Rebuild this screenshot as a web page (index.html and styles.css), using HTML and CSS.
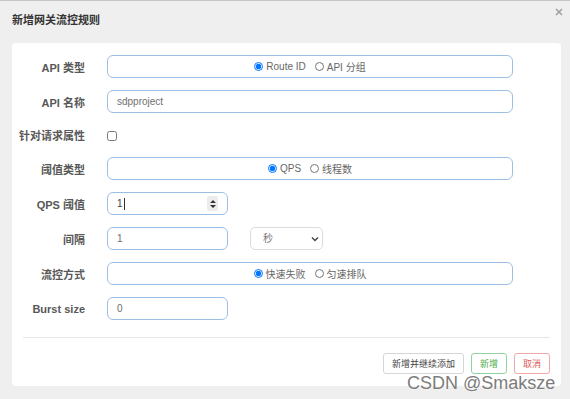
FILE: index.html
```html
<!DOCTYPE html>
<html lang="zh-CN">
<head>
    <meta charset="UTF-8">
    <meta name="viewport" content="width=device-width, initial-scale=1.0">
    <title>新增网关流控规则</title>
    <link rel="stylesheet" href="styles.css">
</head>
<body>
    <div class="dialog">
        <div class="dialog-header">
            <h3 class="dialog-title">新增网关流控规则</h3>
            <span class="close" title="关闭">
                <svg width="8" height="8" viewBox="0 0 8 8"><path d="M1 1L7 7M7 1L1 7" stroke="#a0a0a0" stroke-width="1.6" fill="none"/></svg>
            </span>
        </div>

        <div class="dialog-body">
            <form class="rule-form">
                <div class="row">
                    <label class="label">API 类型</label>
                    <div class="box radios">
                        <label class="opt"><input type="radio" name="resourceMode" checked><span>Route ID</span></label>
                        <label class="opt"><input type="radio" name="resourceMode"><span>API 分组</span></label>
                    </div>
                </div>

                <div class="row">
                    <label class="label">API 名称</label>
                    <input class="box text" type="text" value="sdpproject">
                </div>

                <div class="row row-check">
                    <label class="label">针对请求属性</label>
                    <div><input class="check" type="checkbox"></div>
                </div>

                <div class="row">
                    <label class="label">阈值类型</label>
                    <div class="box radios">
                        <label class="opt"><input type="radio" name="grade" checked><span>QPS</span></label>
                        <label class="opt"><input type="radio" name="grade"><span>线程数</span></label>
                    </div>
                </div>

                <div class="row">
                    <label class="label">QPS 阈值</label>
                    <div class="box short num">
                        <span>1</span><i class="caret"></i>
                        <span class="spin">
                            <svg width="10" height="14" viewBox="0 0 10 14"><path d="M5 3L8 6H2Z M5 11L8 8H2Z" fill="#333"/></svg>
                        </span>
                    </div>
                </div>

                <div class="row">
                    <label class="label">间隔</label>
                    <div class="inline">
                        <input class="box short text" type="text" value="1">
                        <div class="select">
                            <select>
                                <option>秒</option>
                                <option>分</option>
                                <option>时</option>
                                <option>天</option>
                            </select>
                            <svg class="chevron" width="8" height="6" viewBox="0 0 8 6"><path d="M1 1.5L4 4.5L7 1.5" stroke="#444" stroke-width="1.4" fill="none"/></svg>
                        </div>
                    </div>
                </div>

                <div class="row">
                    <label class="label">流控方式</label>
                    <div class="box radios">
                        <label class="opt"><input type="radio" name="behavior" checked><span>快速失败</span></label>
                        <label class="opt"><input type="radio" name="behavior"><span>匀速排队</span></label>
                    </div>
                </div>

                <div class="row">
                    <label class="label">Burst size</label>
                    <input class="box short text" type="text" value="0">
                </div>
            </form>

            <div class="separator"></div>

            <div class="footer">
                <button class="btn btn-default">新增并继续添加</button>
                <button class="btn btn-success">新增</button>
                <button class="btn btn-danger">取消</button>
            </div>
        </div>
    </div>

    <div class="watermark">CSDN @Smaksze</div>
</body>
</html>
```

FILE: styles.css
```css
* {
    box-sizing: border-box;
}

body {
    margin: 0;
    height: 399px;
    overflow: hidden;
    position: relative;
    background: #efefef;
    border-top: 1px solid #c4c4c4;
    font-family: "Liberation Sans", "Noto Sans CJK SC", sans-serif;
    color: #555;
}

.dialog-header {
    display: flex;
    justify-content: space-between;
    align-items: flex-start;
    height: 42px;
    padding: 0 7px 0 12px;
}

.dialog-title {
    margin: 0;
    padding-top: 12px;
    font-size: 11px;
    line-height: 15px;
    font-weight: bold;
    color: #333;
}

.close {
    padding-top: 7px;
    line-height: 0;
}

.dialog-body {
    margin: 0 9px 0 12px;
    background: #fff;
    border-radius: 4px;
    padding: 12px 0;
}

/* Form rows */
.rule-form {
    display: flex;
    flex-direction: column;
    gap: 12px;
    padding-right: 48px;
}

.row {
    display: grid;
    grid-template-columns: 73px 1fr;
    column-gap: 22px;
    align-items: center;
    height: 23px;
}

.row-check {
    height: 20px;
}

.label {
    text-align: right;
    white-space: nowrap;
    font-size: 11px;
    font-weight: bold;
    color: #585858;
}

.box {
    height: 23px;
    border: 1px solid #9cc0e4;
    border-radius: 6px;
    font: inherit;
    font-size: 10px;
    color: #6f6f6f;
    padding: 0 9px;
    background: #fff;
    outline: none;
}

.short {
    width: 121px;
}

.radios {
    display: flex;
    justify-content: center;
    align-items: center;
    gap: 9px;
    color: #666;
}

.opt {
    display: flex;
    align-items: center;
    gap: 3px;
}

.opt input {
    width: 9px;
    height: 9px;
    margin: 0;
}

.check {
    display: block;
    width: 10px;
    height: 10px;
    margin: 2px 0 0;
}

.num {
    display: flex;
    align-items: center;
    color: #444;
}

.caret {
    display: inline-block;
    width: 1px;
    height: 12px;
    background: #333;
    margin-left: 1px;
}

.spin {
    margin-left: auto;
    display: flex;
    align-items: center;
    justify-content: center;
    width: 11px;
    height: 15px;
    background: #ececec;
    border-radius: 2px;
}

.inline {
    display: flex;
    gap: 22px;
}

.select {
    position: relative;
    width: 73px;
    height: 23px;
}

.select select {
    appearance: none;
    width: 100%;
    height: 100%;
    border: 1px solid #dcdcdc;
    border-radius: 5px;
    padding: 0 0 0 12px;
    background: #fff;
    font-family: inherit;
    font-size: 10px;
    color: #777;
}

.chevron {
    position: absolute;
    right: 4px;
    top: 9px;
}

/* Footer */
.separator {
    border-top: 1px solid #e6e6e6;
    margin: 17px 11px 15px;
}

.footer {
    display: flex;
    justify-content: flex-end;
    gap: 7px;
    padding: 0 11px;
}

.btn {
    height: 21px;
    padding: 0 8px;
    border-radius: 3px;
    background: #fff;
    font-family: inherit;
    font-size: 9px;
    cursor: pointer;
}

.btn-default {
    border: 1px solid #d6d6d6;
    color: #444;
}

.btn-success {
    border: 1px solid #8fd4a0;
    color: #4cae4c;
}

.btn-danger {
    border: 1px solid #f0a8a8;
    color: #e05a5a;
}

.watermark {
    position: absolute;
    left: 407px;
    top: 373px;
    font-size: 18px;
    line-height: 18px;
    color: #7c7c7c;
    text-shadow: 0 0 1px #fff, 0 0 2px #fff;
    white-space: nowrap;
}
```
